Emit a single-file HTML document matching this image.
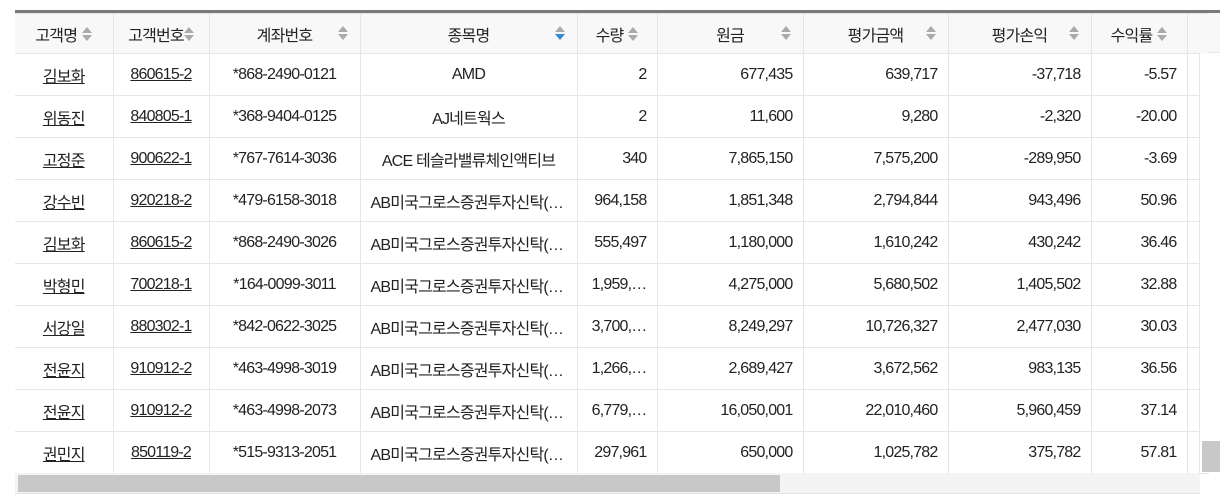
<!DOCTYPE html><html><head><meta charset="utf-8"><style>
body{margin:0;width:1224px;height:499px;background:#fff;overflow:hidden;font-family:"Liberation Sans","Noto Sans CJK KR",sans-serif;font-size:16px;color:#222;position:relative}
.wrap{position:absolute;left:15px;top:10px;width:1205px;border-top:3px solid #7a7a7a}
.hbg{position:absolute;left:1187px;top:13px;width:33px;height:40px;background:#f8f8f8;border-bottom:1px solid #e6e6e6;box-sizing:border-box}
table{border-collapse:collapse;table-layout:fixed;position:absolute;left:15px;top:13px}
td,th{border:1px solid #e6e6e6;height:41px;padding:0 10px;white-space:nowrap;overflow:hidden;letter-spacing:-0.8px}
th{background:#f8f8f8;font-weight:normal;height:39px;position:relative}
td:first-child,th:first-child{border-left:none}
.c{text-align:center}.r{text-align:right}
u{text-decoration:underline}
.s{display:inline-block;width:10px;height:16px;vertical-align:-2px;margin-left:5px;position:relative}
.s:before{content:"";position:absolute;left:0;top:0;border:5px solid transparent;border-bottom:6px solid #aaa;border-top:0}
.s:after{content:"";position:absolute;left:0;top:8px;border:5px solid transparent;border-top:6px solid #aaa;border-bottom:0}
.s.b:after{border-top-color:#3a86d6}
.sr{position:absolute;right:12px;top:12px;margin:0}
</style></head><body>
<div class="wrap"></div>
<div class="hbg"></div>
<table>
<colgroup><col style="width:98px"><col style="width:96px"><col style="width:151px"><col style="width:217px"><col style="width:80px"><col style="width:146px"><col style="width:145px"><col style="width:143px"><col style="width:96px"><col style="width:12px"></colgroup>
<tr><th class="c">고객명<span class="s"></span></th><th class="c">고객번호<span class="s" style="margin-left:0"></span></th><th class="c">계좌번호<span class="s sr"></span></th><th class="c">종목명<span class="s b sr"></span></th><th class="c">수량<span class="s"></span></th><th class="c">원금<span class="s sr"></span></th><th class="c">평가금액<span class="s sr"></span></th><th class="c">평가손익<span class="s sr"></span></th><th class="c">수익률<span class="s"></span></th><th style="border-right:none"></th></tr>
<tr><td class="c"><u>김보화</u></td><td class="c"><u>860615-2</u></td><td class="c">*868-2490-0121</td><td class="c">AMD</td><td class="r">2</td><td class="r">677,435</td><td class="r">639,717</td><td class="r">-37,718</td><td class="r">-5.57</td><td></td></tr>
<tr><td class="c"><u>위동진</u></td><td class="c"><u>840805-1</u></td><td class="c">*368-9404-0125</td><td class="c">AJ네트웍스</td><td class="r">2</td><td class="r">11,600</td><td class="r">9,280</td><td class="r">-2,320</td><td class="r">-20.00</td><td></td></tr>
<tr><td class="c"><u>고정준</u></td><td class="c"><u>900622-1</u></td><td class="c">*767-7614-3036</td><td class="c">ACE 테슬라밸류체인액티브</td><td class="r">340</td><td class="r">7,865,150</td><td class="r">7,575,200</td><td class="r">-289,950</td><td class="r">-3.69</td><td></td></tr>
<tr><td class="c"><u>강수빈</u></td><td class="c"><u>920218-2</u></td><td class="c">*479-6158-3018</td><td>AB미국그로스증권투자신탁(…</td><td class="r">964,158</td><td class="r">1,851,348</td><td class="r">2,794,844</td><td class="r">943,496</td><td class="r">50.96</td><td></td></tr>
<tr><td class="c"><u>김보화</u></td><td class="c"><u>860615-2</u></td><td class="c">*868-2490-3026</td><td>AB미국그로스증권투자신탁(…</td><td class="r">555,497</td><td class="r">1,180,000</td><td class="r">1,610,242</td><td class="r">430,242</td><td class="r">36.46</td><td></td></tr>
<tr><td class="c"><u>박형민</u></td><td class="c"><u>700218-1</u></td><td class="c">*164-0099-3011</td><td>AB미국그로스증권투자신탁(…</td><td class="r">1,959,…</td><td class="r">4,275,000</td><td class="r">5,680,502</td><td class="r">1,405,502</td><td class="r">32.88</td><td></td></tr>
<tr><td class="c"><u>서강일</u></td><td class="c"><u>880302-1</u></td><td class="c">*842-0622-3025</td><td>AB미국그로스증권투자신탁(…</td><td class="r">3,700,…</td><td class="r">8,249,297</td><td class="r">10,726,327</td><td class="r">2,477,030</td><td class="r">30.03</td><td></td></tr>
<tr><td class="c"><u>전윤지</u></td><td class="c"><u>910912-2</u></td><td class="c">*463-4998-3019</td><td>AB미국그로스증권투자신탁(…</td><td class="r">1,266,…</td><td class="r">2,689,427</td><td class="r">3,672,562</td><td class="r">983,135</td><td class="r">36.56</td><td></td></tr>
<tr><td class="c"><u>전윤지</u></td><td class="c"><u>910912-2</u></td><td class="c">*463-4998-2073</td><td>AB미국그로스증권투자신탁(…</td><td class="r">6,779,…</td><td class="r">16,050,001</td><td class="r">22,010,460</td><td class="r">5,960,459</td><td class="r">37.14</td><td></td></tr>
<tr><td class="c"><u>권민지</u></td><td class="c"><u>850119-2</u></td><td class="c">*515-9313-2051</td><td>AB미국그로스증권투자신탁(…</td><td class="r">297,961</td><td class="r">650,000</td><td class="r">1,025,782</td><td class="r">375,782</td><td class="r">57.81</td><td></td></tr>
</table>
<div style="position:absolute;left:1199px;top:53px;width:22px;height:420px;background:#fff;border-left:1px solid #e6e6e6"></div>
<div style="position:absolute;left:1202px;top:441px;width:18px;height:31px;background:#c8c8c8"></div>
<div style="position:absolute;left:15px;top:473px;width:1185px;height:20px;background:#f4f4f4;border-bottom:1px solid #e6e6e6"></div>
<div style="position:absolute;left:18px;top:475px;width:762px;height:17px;background:#c8c8c8"></div>
</body></html>
